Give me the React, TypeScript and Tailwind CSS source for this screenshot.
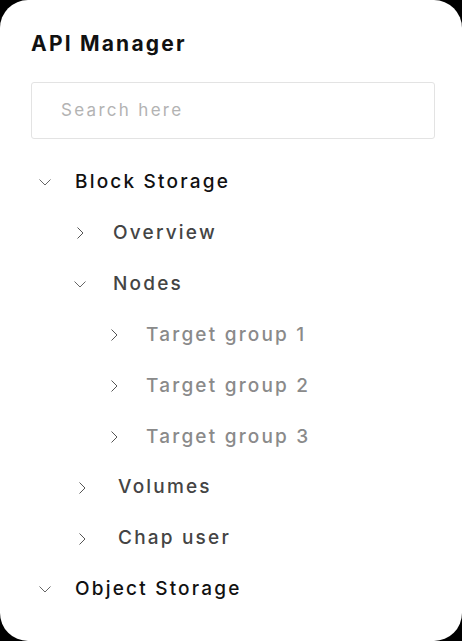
import type { ReactNode } from "react";

type Row = {
  label: string;
  open: boolean;
  pad: string;
  box: string;
  tone: string;
};

const ROWS: Row[] = [
  { label: "Block Storage", open: true, pad: "pl-[8px]", box: "w-[36px]", tone: "text-[#111111]" },
  { label: "Overview", open: false, pad: "pl-[46px]", box: "w-[36px]", tone: "text-[#444444]" },
  { label: "Nodes", open: true, pad: "pl-[43px]", box: "w-[39px]", tone: "text-[#444444]" },
  { label: "Target group 1", open: false, pad: "pl-[80px]", box: "w-[35px]", tone: "text-[#8a8a8a]" },
  { label: "Target group 2", open: false, pad: "pl-[80px]", box: "w-[35px]", tone: "text-[#8a8a8a]" },
  { label: "Target group 3", open: false, pad: "pl-[80px]", box: "w-[35px]", tone: "text-[#8a8a8a]" },
  { label: "Volumes", open: false, pad: "pl-[48px]", box: "w-[39px]", tone: "text-[#444444]" },
  { label: "Chap user", open: false, pad: "pl-[48px]", box: "w-[39px]", tone: "text-[#444444]" },
  { label: "Object Storage", open: true, pad: "pl-[8px]", box: "w-[36px]", tone: "text-[#111111]" },
];

function Chevron({ open }: { open: boolean }) {
  if (open) {
    return (
      <svg width="12" height="7" viewBox="0 0 12 7" fill="none" className="mt-[1px]">
        <path d="M0.5 0.5L6 6L11.5 0.5" stroke="#666666" strokeWidth="1" />
      </svg>
    );
  }
  return (
    <svg width="7" height="12" viewBox="0 0 7 12" fill="none">
      <path d="M0.5 0.5L6 6L0.5 11.5" stroke="#555555" strokeWidth="1" />
    </svg>
  );
}

function TreeRow({ row, children }: { row: Row; children?: ReactNode }) {
  return (
    <li className={`flex h-[50.875px] items-center ${row.pad}`}>
      <span className={`flex shrink-0 items-center ${row.box}`}>
        <Chevron open={row.open} />
      </span>
      <span className={`text-[19px] font-medium tracking-[2.2px] ${row.tone}`}>{row.label}</span>
      {children}
    </li>
  );
}

export default function App() {
  return (
    <div className="min-h-screen bg-black">
      <div
        className="flex h-[641px] w-[462px] flex-col rounded-[28px] bg-white pl-[31px] pr-[27px] pt-[30px]"
        style={{ fontFamily: "Inter, 'Open Sans', sans-serif" }}
      >
        <h1 className="text-[21px] font-bold leading-[28px] tracking-[2.2px] text-[#111111]">
          API Manager
        </h1>

        <div className="mt-[24px] flex h-[57px] items-center rounded-[3px] border border-[#e3e3e3] pl-[29px]">
          <input
            type="text"
            placeholder="Search here"
            className="w-full bg-transparent text-[17px] tracking-[2.3px] text-[#333333] outline-none placeholder:text-[#b3b3b3]"
          />
        </div>

        <ul className="mt-[18px] flex flex-col">
          {ROWS.map((r) => (
            <TreeRow key={r.label} row={r} />
          ))}
        </ul>
      </div>
    </div>
  );
}
